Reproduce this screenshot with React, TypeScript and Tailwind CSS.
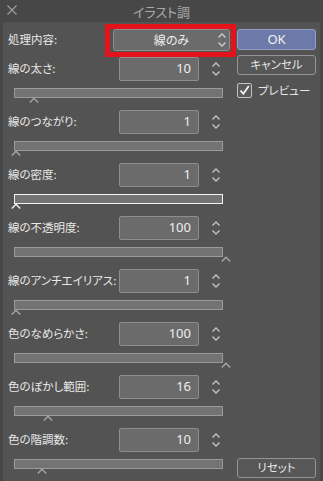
import React from "react";

const rows = [
  { label: "線の太さ:", value: "10", caret: 33 },
  { label: "線のつながり:", value: "1", caret: 15 },
  { label: "線の密度:", value: "1", caret: 15, focus: true },
  { label: "線の不透明度:", value: "100", caret: 225 },
  { label: "線のアンチエイリアス:", value: "1", caret: 15 },
  { label: "色のなめらかさ:", value: "100", caret: 225 },
  { label: "色のぼかし範囲:", value: "16", caret: 47 },
  { label: "色の階調数:", value: "10", caret: 41 },
];

const font = "font-['Noto_Sans_CJK_JP','Noto_Sans',sans-serif] [font-feature-settings:'palt']";

function Spinner({ color = "#c4c4c4" }: { color?: string }) {
  return (
    <svg width="10" height="16" viewBox="0 0 10 16" fill="none">
      <path d="M1.5 5.5 L5 2 L8.5 5.5" stroke={color} strokeWidth="1.3" />
      <path d="M1.5 10.5 L5 14 L8.5 10.5" stroke={color} strokeWidth="1.3" />
    </svg>
  );
}

function Caret({ color }: { color: string }) {
  return (
    <svg width="10" height="6" viewBox="0 0 10 6" fill="none">
      <path d="M0.8 5.5 L5 1.2 L9.2 5.5" stroke={color} strokeWidth="1.3" />
    </svg>
  );
}

export default function App() {
  return (
    <div className={`w-[323px] h-[481px] bg-[#474747] flex flex-col overflow-hidden ${font}`}>
      {/* title bar */}
      <div className="h-[22px] relative flex items-center justify-center shrink-0">
        <svg className="absolute left-[7px] top-[5px]" width="10" height="10" viewBox="0 0 10 10">
          <path d="M0.5 0.5 L9.5 9.5 M9.5 0.5 L0.5 9.5" stroke="#9c9c9c" strokeWidth="1.2" />
        </svg>
        <span className="text-[13px] text-[#a9a9a9] leading-none">イラスト調</span>
      </div>
      {/* body */}
      <div className="flex-1 mx-[3px] bg-[#535353] flex">
        {/* left column */}
        <div className="w-[234px] flex flex-col">
          <div className="h-[35px] flex items-center">
            <span className="w-[110px] pl-[5px] text-[11.5px] text-[#e8e8e8]">処理内容:</span>
            <div className="relative w-[117px] h-[22px] bg-[#6b6b6b] border border-[#8e8e8e] rounded-[3px] flex items-center justify-center">
              <span className="text-[12px] text-[#efefef]">線のみ</span>
              <div className="absolute right-[2px] top-[2px]">
                <Spinner color="#cfcfcf" />
              </div>
              <div className="absolute -left-[9px] -right-[7px] -top-[6px] -bottom-[7px] border-[5px] border-[#e5121a]" />
            </div>
          </div>
          {rows.map((r) => (
            <div key={r.label} className="h-[53px] flex flex-col">
              <div className="h-[24px] flex items-center">
                <span className="w-[116px] pl-[5px] text-[11.5px] text-[#e8e8e8] whitespace-nowrap">{r.label}</span>
                <div className="w-[80px] h-[24px] bg-[#6b6b6b] border border-[#8e8e8e] rounded-[2px] flex items-center justify-end pr-[7px]">
                  <span className="text-[13px] text-[#efefef] font-['Noto_Sans',sans-serif]">{r.value}</span>
                </div>
                <div className="ml-[12px]">
                  <Spinner />
                </div>
              </div>
              <div
                className={`relative ml-[11px] mt-[7px] w-[209px] h-[10px] bg-[#737373] border ${
                  r.focus ? "border-[#f2f2f2]" : "border-[#9a9a9a]"
                }`}
              >
                <div className="absolute top-full mt-[0px]" style={{ left: r.caret - 14 - 5 }}>
                  <Caret color={r.focus ? "#f4f4f4" : "#a8a8a8"} />
                </div>
              </div>
            </div>
          ))}
        </div>
        {/* right column */}
        <div className="w-[79px] flex flex-col pt-[7px] pb-[3px]">
          <div className="h-[21px] bg-[#6d79a8] border border-[#939dc4] rounded-[3px] flex items-center justify-center">
            <span className="text-[13px] text-[#f2f2f2] font-['Noto_Sans',sans-serif]">OK</span>
          </div>
          <div className="mt-[5px] h-[20px] bg-[#575757] border border-[#959595] rounded-[3px] flex items-center justify-center">
            <span className="text-[11.5px] text-[#e8e8e8]">キャンセル</span>
          </div>
          <div className="mt-[7px] flex items-center">
            <div className="w-[15px] h-[15px] border border-[#c2c2c2] rounded-[2px] bg-[#5a5a5a] flex items-center justify-center">
              <svg width="11" height="11" viewBox="0 0 11 11" fill="none">
                <path d="M1.5 5.5 L4.3 8.8 L9.8 1" stroke="#f4f4f4" strokeWidth="1.8" />
              </svg>
            </div>
            <span className="ml-[6px] text-[11.5px] text-[#e8e8e8]">プレビュー</span>
          </div>
          <div className="mt-auto h-[20px] bg-[#575757] border border-[#959595] rounded-[3px] flex items-center justify-center">
            <span className="text-[11.5px] text-[#e8e8e8]">リセット</span>
          </div>
        </div>
      </div>
    </div>
  );
}
